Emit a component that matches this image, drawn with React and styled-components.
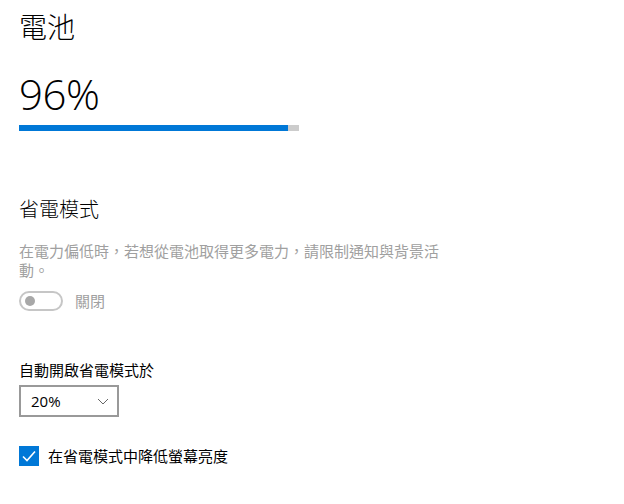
import React from "react";
import styled, { createGlobalStyle } from "styled-components";

const GlobalStyle = createGlobalStyle`
  html, body {
    margin: 0;
    padding: 0;
    background: #fff;
  }
  body {
    font-family: "Noto Sans CJK TC", "Noto Sans", sans-serif;
    color: #000;
  }
`;

const Page = styled.div`
  width: 624px;
  height: 504px;
  padding: 8px 0 0 19px;
  box-sizing: border-box;
  display: flex;
  flex-direction: column;
`;

const Title = styled.h1`
  margin: 0;
  font-size: 28px;
  line-height: 36px;
  font-weight: 300;
`;

const Percent = styled.div`
  margin-top: 22px;
  font-family: "Open Sans", "Noto Sans", sans-serif;
  font-weight: 300;
  font-size: 42px;
  line-height: 56px;
  letter-spacing: -0.5px;
`;

const Bar = styled.div`
  margin-top: 3px;
  width: 280px;
  height: 6px;
  background: #cccccc;
`;

const Fill = styled.div`
  height: 100%;
  background: #0078d7;
`;

const SectionTitle = styled.h2`
  margin: 64px 0 0;
  font-size: 20px;
  line-height: 28px;
  font-weight: 300;
`;

const Description = styled.p`
  margin: 18px 0 0;
  width: 428px;
  font-size: 15px;
  line-height: 19px;
  color: #a0a0a0;
`;

const ToggleRow = styled.div`
  margin-top: 12px;
  display: flex;
  align-items: center;
  gap: 12px;
`;

const Toggle = styled.div`
  width: 44px;
  height: 20px;
  box-sizing: border-box;
  border: 2px solid #c6c6c6;
  border-radius: 10px;
  display: flex;
  align-items: center;
  padding-left: 4px;
`;

const Knob = styled.div`
  width: 10px;
  height: 10px;
  border-radius: 50%;
  background: #a8a8a8;
`;

const ToggleLabel = styled.span`
  font-size: 15px;
  line-height: 20px;
  color: #a0a0a0;
`;

const Label = styled.div`
  margin-top: 49px;
  font-size: 15px;
  line-height: 20px;
`;

const Select = styled.div`
  margin-top: 5px;
  width: 100px;
  height: 32px;
  box-sizing: border-box;
  border: 2px solid #999999;
  display: flex;
  align-items: center;
  justify-content: space-between;
  padding: 0 8px 0 10px;
  font-family: "Open Sans", "Noto Sans", sans-serif;
  font-size: 15px;
`;

const CheckRow = styled.label`
  margin-top: 29px;
  display: flex;
  align-items: center;
  gap: 9px;
  font-size: 15px;
  line-height: 20px;
`;

const CheckBox = styled.span`
  width: 20px;
  height: 20px;
  background: #0078d7;
  display: flex;
  align-items: center;
  justify-content: center;
`;

export default function App() {
  const level = 96;
  return (
    <>
      <GlobalStyle />
      <Page>
        <Title>電池</Title>
        <Percent>{level}%</Percent>
        <Bar>
          <Fill style={{ width: `${level}%` }} />
        </Bar>

        <SectionTitle>省電模式</SectionTitle>
        <Description>
          在電力偏低時，若想從電池取得更多電力，請限制通知與背景活動。
        </Description>
        <ToggleRow>
          <Toggle>
            <Knob />
          </Toggle>
          <ToggleLabel>關閉</ToggleLabel>
        </ToggleRow>

        <Label>自動開啟省電模式於</Label>
        <Select>
          <span>20%</span>
          <svg width="12" height="7" viewBox="0 0 12 7">
            <path d="M1 1 L6 6 L11 1" fill="none" stroke="#666" strokeWidth="1" />
          </svg>
        </Select>

        <CheckRow>
          <CheckBox>
            <svg width="16" height="16" viewBox="0 0 16 16">
              <path d="M2 8.5 L6 12.5 L14 3.5" fill="none" stroke="#fff" strokeWidth="1.6" />
            </svg>
          </CheckBox>
          在省電模式中降低螢幕亮度
        </CheckRow>
      </Page>
    </>
  );
}
